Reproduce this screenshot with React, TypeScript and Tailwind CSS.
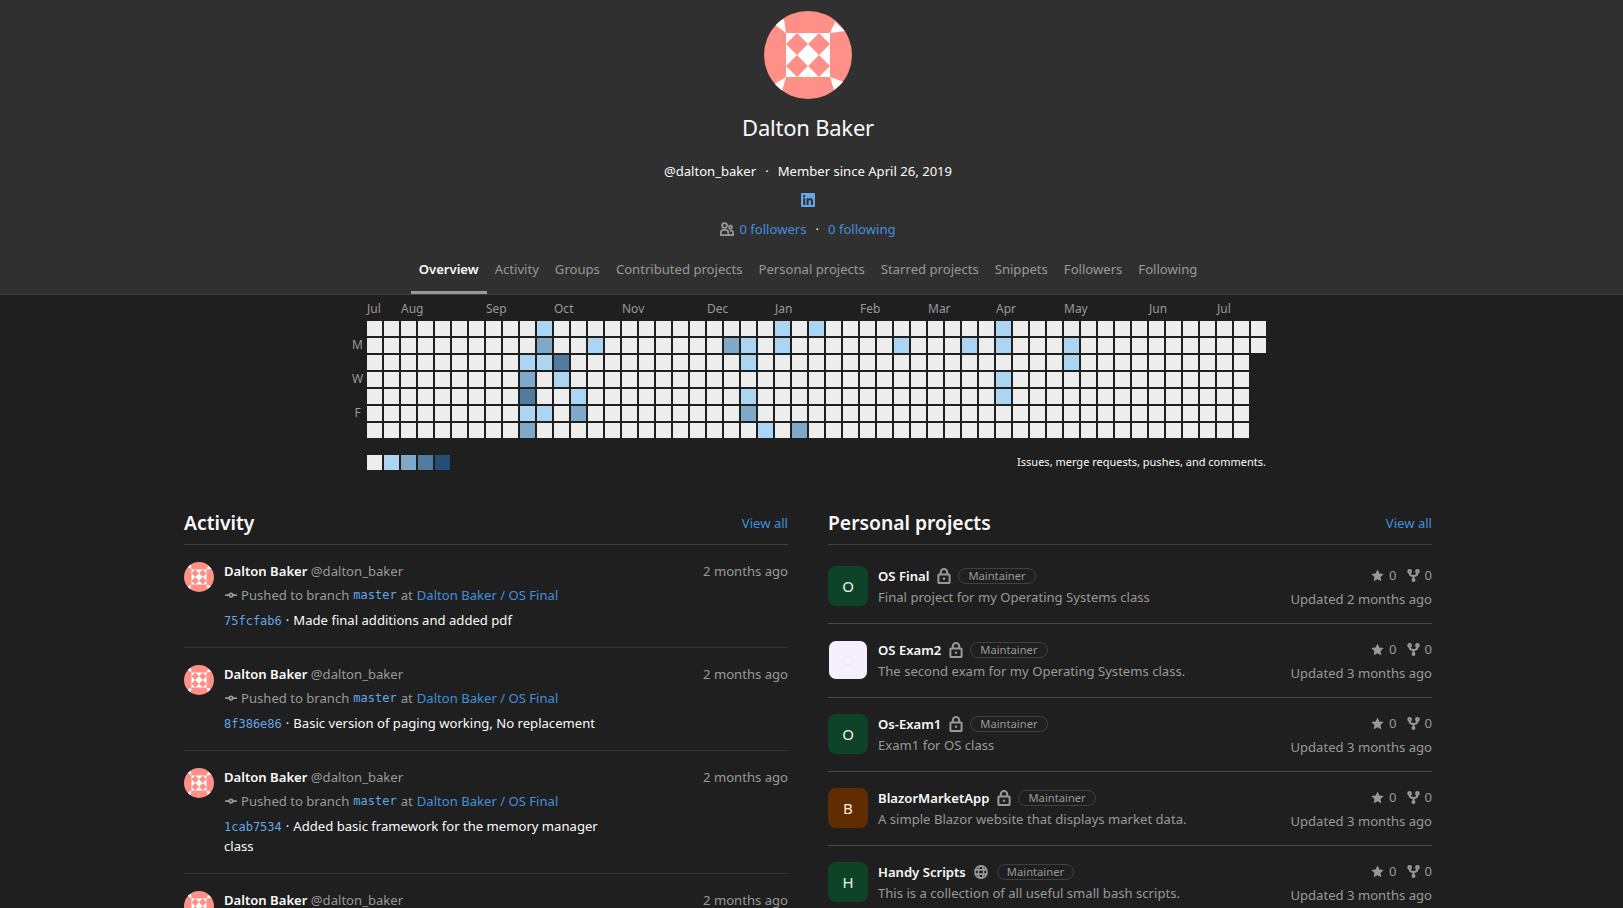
import { GitCommitHorizontal } from "lucide-react"
import { FaLinkedin } from "react-icons/fa"

const tabs = ["Overview", "Activity", "Groups", "Contributed projects", "Personal projects", "Starred projects", "Snippets", "Followers", "Following"]

const months: [string, number][] = [
  ["Jul", 0], ["Aug", 2], ["Sep", 7], ["Oct", 11], ["Nov", 15], ["Dec", 20], ["Jan", 24],
  ["Feb", 29], ["Mar", 33], ["Apr", 37], ["May", 41], ["Jun", 46], ["Jul", 50],
]

const levels = ["bg-[#ededed]", "bg-[#acd5f2]", "bg-[#7fa8c9]", "bg-[#527ba0]", "bg-[#254e77]"]

// "col,row" -> level
const contributions: Record<string, number> = {
  "10,0": 1, "24,0": 1, "26,0": 1, "37,0": 1,
  "10,1": 2, "13,1": 1, "21,1": 2, "22,1": 1, "24,1": 1, "31,1": 1, "35,1": 1, "37,1": 1, "41,1": 1,
  "9,2": 1, "10,2": 1, "11,2": 3, "22,2": 1, "41,2": 1,
  "9,3": 2, "11,3": 1, "37,3": 1,
  "9,4": 3, "12,4": 1, "22,4": 1, "37,4": 1,
  "9,5": 1, "10,5": 1, "12,5": 2, "22,5": 2,
  "9,6": 2, "23,6": 1, "25,6": 2,
}

const activity = [
  { sha: "75fcfab6", message: "Made final additions and added pdf" },
  { sha: "8f386e86", message: "Basic version of paging working, No replacement" },
  { sha: "1cab7534", message: "Added basic framework for the memory manager class" },
  { sha: "9d2ab410", message: "Added paging" },
]

const projects = [
  { name: "OS Final", letter: "O", color: "bg-[#0e4328] text-[#e8f5ec]", icon: "lock", desc: "Final project for my Operating Systems class", updated: "Updated 2 months ago" },
  { name: "OS Exam2", letter: "O", color: "bg-[#f4f0ff] text-[#efeafa] border border-[#1f1f1f]", icon: "lock", desc: "The second exam for my Operating Systems class.", updated: "Updated 3 months ago" },
  { name: "Os-Exam1", letter: "O", color: "bg-[#0e4328] text-[#e8f5ec]", icon: "lock", desc: "Exam1 for OS class", updated: "Updated 3 months ago" },
  { name: "BlazorMarketApp", letter: "B", color: "bg-[#5f2d00] text-[#fdf1dd]", icon: "lock", desc: "A simple Blazor website that displays market data.", updated: "Updated 3 months ago" },
  { name: "Handy Scripts", letter: "H", color: "bg-[#0e4328] text-[#e8f5ec]", icon: "globe", desc: "This is a collection of all useful small bash scripts.", updated: "Updated 3 months ago" },
]

function Identicon({ className }: { className: string }) {
  return (
    <svg viewBox="0 0 88 88" className={className}>
      <clipPath id="identicon-clip">
        <circle cx="44" cy="44" r="44" />
      </clipPath>
      <g clipPath="url(#identicon-clip)">
        <rect width="88" height="88" fill="#fe9088" />
        <rect x="22" y="22" width="44" height="44" fill="#fff" />
        <path d="M33 22l11 11-11 11-11-11zM55 22l11 11-11 11-11-11zM33 44l11 11-11 11-11-11zM55 44l11 11-11 11-11-11z" fill="#fe9088" />
        <path d="M22 22L10 13 20 8zM66 22L71 11 81 20zM22 66L9 74 18 80zM66 66L70 79 80 71z" fill="#fff" />
      </g>
    </svg>
  )
}

function LockIcon() {
  return (
    <svg viewBox="0 0 16 16" className="ml-[7px] mr-[6px] h-4 w-4 shrink-0 text-[#999]" fill="none" stroke="currentColor" strokeWidth="2">
      <rect x="2.4" y="6.6" width="11.2" height="8.4" rx="0.6" />
      <path d="M4.8 6.6V4.2a3.2 3.2 0 0 1 6.4 0v2.4" />
      <circle cx="8" cy="10.8" r="1.2" fill="currentColor" stroke="none" />
    </svg>
  )
}

function GlobeIcon() {
  return (
    <svg viewBox="0 0 16 16" className="ml-2 mr-[9px] h-[14px] w-[14px] shrink-0 text-[#999]" fill="none" stroke="currentColor" strokeWidth="1.8">
      <circle cx="8" cy="8" r="7" />
      <ellipse cx="8" cy="8" rx="3" ry="7" />
      <path d="M1 5.6h14M1 10.4h14" />
    </svg>
  )
}

function StarIcon() {
  return (
    <svg viewBox="0 0 16 16" className="h-[13px] w-[13px] text-[#999]" fill="currentColor">
      <path d="M8 .6l2.3 4.9 5.3.7-3.9 3.7 1 5.3L8 12.6l-4.7 2.6 1-5.3L.4 6.2l5.3-.7z" />
    </svg>
  )
}

function ForkIcon() {
  return (
    <svg viewBox="0 0 16 16" className="h-[13px] w-[13px] text-[#999]" fill="none" stroke="currentColor" strokeWidth="2.4">
      <circle cx="3.2" cy="3" r="1.7" />
      <circle cx="12.8" cy="3" r="1.7" />
      <circle cx="8" cy="13.6" r="1.2" />
      <path d="M3.2 5c0 2.6 1.6 3.6 4.8 3.6S12.8 7.6 12.8 5M8 8.6V12" />
    </svg>
  )
}

function UsersIcon() {
  return (
    <svg viewBox="0 0 16 16" className="h-[14px] w-[14px] text-[#999]" fill="none" stroke="currentColor" strokeWidth="2">
      <circle cx="5.2" cy="4" r="2.8" />
      <path d="M1 15v-3a3 3 0 0 1 3-3h2.4a3 3 0 0 1 3 3v3z" />
      <circle cx="12" cy="6" r="1.8" />
      <path d="M11 9.8h1.6a2.4 2.4 0 0 1 2.4 2.4V15h-5" />
    </svg>
  )
}

function Header() {
  return (
    <header className="bg-[#303030] border-b border-[#404040] pr-[7px]">
      <div className="flex flex-col items-center pt-[11px]">
        <Identicon className="h-[88px] w-[88px]" />
        <h1 className="mt-3 text-[22px] leading-8 tracking-[-0.01em] text-[#fafafa]">Dalton Baker</h1>
        <p className="mt-[18px] flex h-5 items-center text-[#fafafa]">
          @dalton_baker
          <span className="mx-[9px]">·</span>
          Member since April 26, 2019
        </p>
        <div className="mt-[11px] flex h-4 items-center">
          <FaLinkedin className="h-4 w-4 text-[#63a6e9]" />
        </div>
        <p className="mt-[11px] flex h-5 items-center text-[#428fdc]">
          <UsersIcon />
          <span className="ml-[5px]">0 followers</span>
          <span className="mx-[9px] text-[#fafafa]">·</span>
          <span>0 following</span>
        </p>
        <nav className="mt-5 flex">
          {tabs.map((tab, i) => (
            <a
              key={tab}
              className={
                i === 0
                  ? "border-b-[3px] border-[#999] px-2 pb-3 font-semibold text-[#fafafa]"
                  : "border-b-[3px] border-transparent px-2 pb-3 text-[#999]"
              }
            >
              {tab}
            </a>
          ))}
        </nav>
      </div>
    </header>
  )
}

function Heatmap() {
  return (
    <section className="mx-auto w-[916px] pt-[6px] text-xs">
      <div className="grid grid-cols-[17px_1fr]">
        <div />
        <div className="mb-1 grid h-4 grid-cols-[repeat(53,15px)] gap-x-[2px] text-[#999]">
          {months.map(([m, col], i) => (
            <span key={i} className="whitespace-nowrap leading-4" style={{ gridColumnStart: col + 1, gridRowStart: 1 }}>
              {m}
            </span>
          ))}
        </div>
        <div className="grid grid-rows-[repeat(7,15px)] gap-y-[2px] pr-[2px] text-center leading-[13px] text-[#999]">
          <span />
          <span>M</span>
          <span />
          <span>W</span>
          <span />
          <span>F</span>
          <span />
        </div>
        <div className="grid grid-flow-col grid-cols-[repeat(53,15px)] grid-rows-[repeat(7,15px)] gap-[2px]">
          {Array.from({ length: 52 * 7 + 2 }, (_, i) => {
            const col = Math.floor(i / 7)
            const row = i % 7
            return <div key={i} className={levels[contributions[`${col},${row}`] ?? 0]} />
          })}
        </div>
      </div>
      <div className="mt-[17px] flex items-center justify-between pl-[17px]">
        <div className="flex gap-[2px]">
          {levels.map((l) => (
            <div key={l} className={`h-[15px] w-[15px] ${l}`} />
          ))}
        </div>
        <span className="text-[11px] text-[#fafafa]">Issues, merge requests, pushes, and comments.</span>
      </div>
    </section>
  )
}

function SectionTitle({ title }: { title: string }) {
  return (
    <div className="flex items-center justify-between border-b border-[#404040] pb-[5px]">
      <h2 className="mt-px text-[19.3px] font-semibold leading-8 text-[#fafafa]">{title}</h2>
      <a className="text-[#428fdc]">View all</a>
    </div>
  )
}

function ActivityList() {
  return (
    <div>
      <SectionTitle title="Activity" />
      {activity.map((item) => (
        <div key={item.sha} className="flex border-b border-[#333] pb-[17px] pt-4">
          <Identicon className="mt-px h-[30px] w-[30px] shrink-0" />
          <div className="ml-[10px] flex-1">
            <div className="flex justify-between">
              <div>
                <span className="font-semibold text-[#fafafa]">Dalton Baker</span>{" "}
                <span className="text-[#999]">@dalton_baker</span>
              </div>
              <span className="text-[#999]">2 months ago</span>
            </div>
            <div className="mt-1 flex items-center text-[#999]">
              <GitCommitHorizontal className="mr-[3px] h-[14px] w-[14px]" strokeWidth={3} />
              Pushed to branch
              <span className="mx-1 font-['DejaVu_Sans_Mono',monospace] text-xs text-[#63a6e9]">master</span>
              at
              <a className="ml-1 text-[#428fdc]">Dalton Baker / OS Final</a>
            </div>
            <div className="mt-[5px] max-w-[390px] text-[#fafafa]">
              <span className="font-['DejaVu_Sans_Mono',monospace] text-xs text-[#63a6e9]">{item.sha}</span>
              <span className="mx-1">·</span>
              {item.message}
            </div>
          </div>
        </div>
      ))}
    </div>
  )
}

function ProjectList() {
  return (
    <div>
      <SectionTitle title="Personal projects" />
      {projects.map((p, i) => (
        <div key={p.name} className={i === 0 ? "flex items-start border-b border-[#4a4a4a] pb-[17px] pt-[21px]" : "flex items-start border-b border-[#4a4a4a] pb-[17px] pt-4"}>
          <div className={`flex h-10 w-10 shrink-0 items-center justify-center rounded-lg text-[15px] ${p.color}`}>{p.letter}</div>
          <div className="ml-[10px] h-10 flex-1">
            <div className="flex h-5 items-center">
              <span className="font-semibold text-[#fafafa]">{p.name}</span>
              {p.icon === "lock" ? <LockIcon /> : <GlobeIcon />}
              <span className="rounded-full border border-[#404040] px-[9px] text-[11.2px] leading-[14px] text-[#999]">Maintainer</span>
            </div>
            <p className="pt-px text-[#999]">{p.desc}</p>
          </div>
          <div className="-mb-[3px] -mt-px text-right text-[#999]">
            <div className="flex h-5 items-center justify-end">
              <StarIcon />
              <span className="ml-[5px]">0</span>
              <span className="w-[10px]" />
              <ForkIcon />
              <span className="ml-[5px]">0</span>
            </div>
            <div className="mt-1">{p.updated}</div>
          </div>
        </div>
      ))}
    </div>
  )
}

export default function App() {
  return (
    <div className="h-[908px] overflow-hidden bg-[#1f1f1f] font-['Noto_Sans',sans-serif] text-[13.1px] leading-5">
      <Header />
      <div className="pr-[7px]">
        <Heatmap />
        <main className="mx-auto mt-9 grid w-[1248px] grid-cols-2 gap-x-10">
          <ActivityList />
          <ProjectList />
        </main>
      </div>
    </div>
  )
}
